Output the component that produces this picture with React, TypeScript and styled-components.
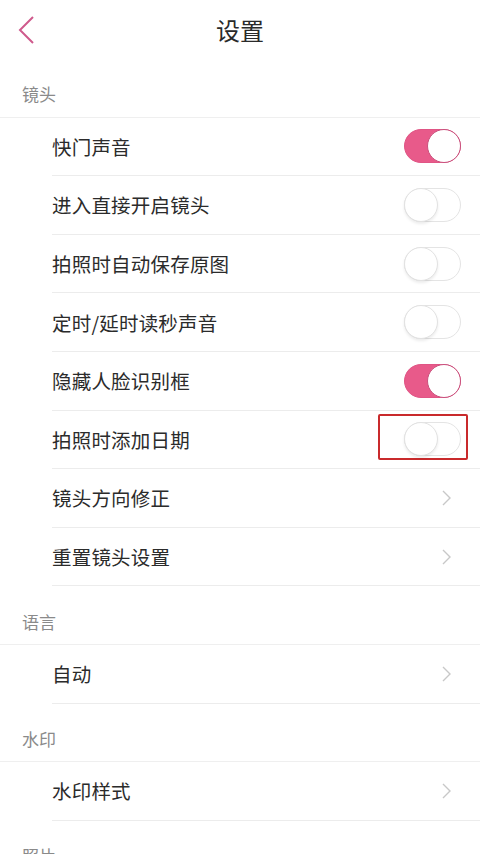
import React from "react";
import styled, { createGlobalStyle } from "styled-components";

const Global = createGlobalStyle`
  html, body { margin: 0; padding: 0; background: #fff; }
  body { font-family: "Noto Sans CJK SC", "Noto Sans", sans-serif; overflow: hidden; }
`;

const Page = styled.div`
  width: 480px;
  height: 854px;
  overflow: hidden;
  background: #fff;
`;

const NavBar = styled.div`
  height: 59px;
  display: flex;
  align-items: center;
  justify-content: center;
  position: relative;
`;

const Back = styled.div`
  position: absolute;
  left: 16px;
  top: 15px;
  width: 20px;
  height: 30px;
  display: flex;
`;

const Title = styled.div`
  font-size: 24px;
  color: #2a2a2a;
  line-height: 1;
`;

const SectionHeader = styled.div`
  height: 58.6px;
  box-sizing: border-box;
  padding-left: 22px;
  display: flex;
  align-items: center;
  font-size: 17px;
  color: #8a8a8a;
  border-bottom: 1px solid #efefef;
  padding-top: 12px;
`;

const Row = styled.div`
  height: 58.6px;
  box-sizing: border-box;
  margin-left: 52px;
  padding-right: 18px;
  display: flex;
  align-items: center;
  justify-content: space-between;
  border-bottom: 1px solid #ececec;
`;

const Label = styled.div`
  font-size: 19.5px;
  color: #2b2b2b;
  letter-spacing: 0.2px;
`;

const ToggleBox = styled.div`
  position: relative;
  display: flex;
  align-items: center;
`;

const Highlight = styled.div`
  position: absolute;
  left: -26px;
  top: -8px;
  width: 86px;
  height: 42px;
  border: 2px solid #c92a2c;
  border-radius: 2px;
`;

const Track = styled.div<{ $on: boolean }>`
  width: 57px;
  height: 34px;
  box-sizing: border-box;
  border-radius: 17px;
  background: ${(p) => (p.$on ? "#e85a8a" : "#ffffff")};
  border: 1px solid ${(p) => (p.$on ? "#e05585" : "#e4e4e4")};
  position: relative;
  margin-right: 1px;
`;

const Knob = styled.div<{ $on: boolean }>`
  position: absolute;
  top: -1px;
  ${(p) => (p.$on ? "right: -1px;" : "left: -1px;")}
  width: 34px;
  height: 34px;
  box-sizing: border-box;
  border-radius: 50%;
  background: #fff;
  border: 1px solid ${(p) => (p.$on ? "#c9507c" : "#e2e2e2")};
  box-shadow: ${(p) => (p.$on ? "none" : "0 2px 3px rgba(0,0,0,0.08)")};
`;

const Chevron = styled.div`
  display: flex;
  margin-right: 11px;
`;

const Toggle = ({ on, highlight }: { on: boolean; highlight?: boolean }) => (
  <ToggleBox>
    {highlight && <Highlight />}
    <Track $on={on}>
      <Knob $on={on} />
    </Track>
  </ToggleBox>
);

const Arrow = () => (
  <Chevron>
    <svg width="9" height="16" viewBox="0 0 9 16">
      <path d="M1 1 L8 8 L1 15" fill="none" stroke="#c8c8c8" strokeWidth="1.4" />
    </svg>
  </Chevron>
);

type Item = { label: string; kind: "toggle" | "arrow"; on?: boolean; highlight?: boolean };

const camera: Item[] = [
  { label: "快门声音", kind: "toggle", on: true },
  { label: "进入直接开启镜头", kind: "toggle", on: false },
  { label: "拍照时自动保存原图", kind: "toggle", on: false },
  { label: "定时/延时读秒声音", kind: "toggle", on: false },
  { label: "隐藏人脸识别框", kind: "toggle", on: true },
  { label: "拍照时添加日期", kind: "toggle", on: false, highlight: true },
  { label: "镜头方向修正", kind: "arrow" },
  { label: "重置镜头设置", kind: "arrow" },
];

const renderRow = (it: Item) => (
  <Row key={it.label}>
    <Label>{it.label}</Label>
    {it.kind === "toggle" ? <Toggle on={!!it.on} highlight={it.highlight} /> : <Arrow />}
  </Row>
);

export default function App() {
  return (
    <Page>
      <Global />
      <NavBar>
        <Back>
          <svg width="20" height="30" viewBox="0 0 20 30">
            <path d="M17 2 L4 15 L17 28" fill="none" stroke="#cf5a8c" strokeWidth="2" />
          </svg>
        </Back>
        <Title>设置</Title>
      </NavBar>
      <SectionHeader>镜头</SectionHeader>
      {camera.map(renderRow)}
      <SectionHeader>语言</SectionHeader>
      {renderRow({ label: "自动", kind: "arrow" })}
      <SectionHeader>水印</SectionHeader>
      {renderRow({ label: "水印样式", kind: "arrow" })}
      <SectionHeader>照片</SectionHeader>
    </Page>
  );
}
